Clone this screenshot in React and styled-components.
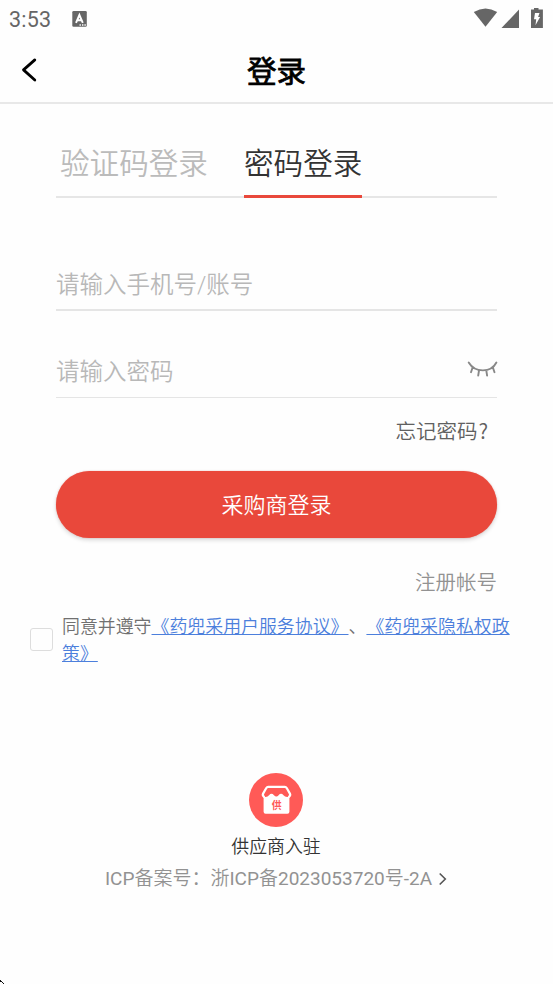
import React from "react";
import styled, { createGlobalStyle } from "styled-components";

const GlobalStyle = createGlobalStyle`
  * { box-sizing: border-box; }
  body {
    margin: 0;
    background: #fefefe;
    font-family: Roboto, "Noto Sans CJK SC", sans-serif;
    overflow: hidden;
    text-spacing-trim: space-all;
  }
`;

const Screen = styled.div`
  position: relative;
  width: 553px;
  height: 984px;
  display: flex;
  flex-direction: column;
  overflow: hidden;
`;

const StatusBar = styled.div`
  height: 40px;
  flex: none;
  display: flex;
  justify-content: space-between;
  padding: 0 9px;
  color: #666;
`;

const StatusGroup = styled.div`
  display: flex;
  height: 38px;
  align-items: center;
`;

const Clock = styled.span`
  font-size: 21.5px;
  line-height: 38px;
  letter-spacing: 0.2px;
  width: 63px;
  padding-top: 1px;
`;

const Header = styled.header`
  height: 64px;
  flex: none;
  display: grid;
  grid-template-columns: 60px 1fr 60px;
  align-items: center;
  border-bottom: 2px solid #e8e8e8;
`;

const BackButton = styled.button`
  border: 0;
  background: none;
  padding: 0 0 3px 20px;
  height: 62px;
  display: flex;
  align-items: center;
`;

const Title = styled.h1`
  margin: 0;
  padding-top: 2px;
  font-size: 29.5px;
  line-height: 60px;
  font-weight: 400;
  -webkit-text-stroke: 0.8px #000;
  text-align: center;
  color: #000;
`;

const Form = styled.main`
  flex: none;
  width: 441px;
  margin: 0 auto;
  display: flex;
  flex-direction: column;
`;

const Tabs = styled.nav`
  height: 94px;
  display: flex;
  align-items: flex-end;
  gap: 36px;
  padding-left: 4px;
  box-shadow: inset 0 -2px #e6e6e6;
`;

const Tab = styled.button`
  border: 0;
  border-bottom: 3px solid ${(p) => (p.$active ? "#e9483b" : "transparent")};
  background: none;
  padding: 0 0 9px;
  font-family: inherit;
  font-size: 29.6px;
  font-weight: 350;
  line-height: 44px;
  color: ${(p) => (p.$active ? "#333" : "#bbb")};
  white-space: nowrap;
`;

const Field = styled.label`
  height: ${(p) => p.$height}px;
  display: flex;
  align-items: flex-end;
  justify-content: space-between;
  border-bottom: ${(p) => p.$rule}px solid #e5e5e5;
`;

const Placeholder = styled.span`
  font-size: 23.5px;
  font-weight: 350;
  line-height: 34px;
  padding-bottom: ${(p) => p.$bottom}px;
  color: #b8b8b8;
`;

const EyeSlot = styled.span`
  display: flex;
  margin-right: -1px;
  padding-bottom: 19px;
`;

const TextLink = styled.a`
  align-self: flex-end;
  height: 30px;
  font-size: 20.5px;
  font-weight: 350;
  line-height: 30px;
  color: ${(p) => p.$color};
  margin: ${(p) => p.$margin};
`;

const QuestionMark = styled.span`
  font-family: "Noto Sans CJK SC", sans-serif;
  line-height: 1;
  margin-left: 1px;
`;

const LoginButton = styled.button`
  height: 67px;
  border: 0;
  border-radius: 34px;
  background: #e9483b;
  color: #fff;
  font-family: inherit;
  font-size: 22px;
  font-weight: 350;
  line-height: 67px;
  box-shadow: 0 0 1px rgba(233, 72, 59, 0.7), 0 2px 4px rgba(0, 0, 0, 0.16);
`;

const Agreement = styled.section`
  display: flex;
  align-items: flex-start;
  gap: 9px;
  margin: 15px 32px 0 30px;
`;

const Checkbox = styled.span`
  flex: none;
  width: 23px;
  height: 23px;
  margin-top: 15px;
  border: 1px solid #ddd;
  border-radius: 3px;
`;

const AgreementText = styled.p`
  margin: 0;
  font-size: 17.92px;
  font-weight: 350;
  line-height: 27px;
  color: #707070;
`;

const PolicyLink = styled.a`
  color: #4c7fdc;
  text-decoration: underline;
  text-decoration-thickness: 1px;
`;

const Footer = styled.footer`
  display: flex;
  flex-direction: column;
  align-items: center;
  margin-top: 106px;
  padding-right: 1px;
`;

const SupplierLabel = styled.span`
  font-size: 17.9px;
  font-weight: 350;
  line-height: 26px;
  margin-top: 7px;
  color: #333;
`;

const IcpLink = styled.a`
  display: flex;
  align-items: center;
  gap: 6px;
  height: 28px;
  font-size: 19px;
  font-weight: 350;
  line-height: 28px;
  margin-top: 5px;
  color: #929292;
`;

const Code = styled.span`
  font-weight: 400;
`;

const Chevron = styled.svg`
  margin-bottom: 1px;
`;

const Pointer = styled.svg`
  position: absolute;
  left: 0;
  bottom: 0;
`;

export default function App() {
  return (
    <Screen>
      <GlobalStyle />
      <StatusBar>
        <StatusGroup>
          <Clock>3:53</Clock>
          <svg width="16" height="17" viewBox="0 0 16 17">
            <rect x="0.3" y="0" width="14.5" height="15.7" rx="1.3" fill="#666" />
            <path d="M4 11.8 7.4 4 10.8 11.8M5.2 9.2h4.4" fill="none" stroke="#fff" strokeWidth="1.9" />
            <path d="M7.5 14h1.4M10 14h1.4M12.4 14h1.4" stroke="#fff" strokeWidth="1.3" />
          </svg>
        </StatusGroup>
        <StatusGroup>
          <svg width="71" height="22" viewBox="0 0 71 22">
            <path d="M0.8 4Q12.5-3 24.2 4L12.5 18.7Z" fill="#666" />
            <path d="M46 1.5V20H28.5Z" fill="#666" />
            <path d="M58 1.6h3V0h4.5v1.6H69.9V20H58Z" fill="#666" />
            <path d="M62 5h4.5l-1.4 4h2L62.5 17.3l.7-6H61Z" fill="#fff" />
          </svg>
        </StatusGroup>
      </StatusBar>

      <Header>
        <BackButton aria-label="返回">
          <svg width="18" height="26" viewBox="0 0 18 26" fill="none" stroke="#000" strokeWidth="2.8" strokeLinecap="round" strokeLinejoin="round">
            <path d="M14.8 2.9 3.5 12.9 14.8 23" />
          </svg>
        </BackButton>
        <Title>登录</Title>
      </Header>

      <Form>
        <Tabs>
          <Tab>验证码登录</Tab>
          <Tab $active>密码登录</Tab>
        </Tabs>
        <Field $height={113} $rule={2}>
          <Placeholder $bottom={7}>请输入手机号/账号</Placeholder>
        </Field>
        <Field $height={87} $rule={1}>
          <Placeholder $bottom={8}>请输入密码</Placeholder>
          <EyeSlot>
            <svg width="31" height="17" viewBox="0 0 31 17" fill="none" stroke="#888" strokeWidth="1.9" strokeLinecap="round">
              <path d="M1.7 1.5C8 12 24 12 29.4 1.5M5.7 6.2 4 11.2M12 9.5 11.2 14.6M19.3 9.5 20.1 14.6M25.8 6.2 27.5 11.2" />
            </svg>
          </EyeSlot>
        </Field>
        <TextLink $color="#606060" $margin="19px 9px 24px 0">忘记密码<QuestionMark>?</QuestionMark></TextLink>
        <LoginButton>采购商登录</LoginButton>
        <TextLink $color="#929292" $margin="30px 0 0">注册帐号</TextLink>
      </Form>

      <Agreement>
        <Checkbox />
        <AgreementText>
          同意并遵守<PolicyLink>《药兜采用户服务协议》</PolicyLink>、<PolicyLink>《药兜采隐私权政策》</PolicyLink>
        </AgreementText>
      </Agreement>

      <Footer>
        <svg width="54" height="54" viewBox="0 0 54 54">
          <circle cx="27" cy="27" r="27" fill="#ff5a57" />
          <path d="M15.6 24.2c-1.6-.9-2.2-2.2-1.5-3.6l3.2-5.6c.4-.7 1-1.1 1.9-1.1h16.6c.9 0 1.5.4 1.9 1.1l3.2 5.6c.7 1.4.1 2.7-1.5 3.6" fill="none" stroke="#fff" strokeWidth="2.2" />
          <path d="M14.6 23.6Q18.2 24.8 20 22.2Q22.5 19.4 25 22.2Q27.3 25 29.6 22.2Q32 19.4 34.5 22.2Q36.5 24.8 40.4 23.6V38.8q0 2-2 2H16.6q-2 0-2-2Z" fill="#fff" />
          <text x="27.6" y="35.7" textAnchor="middle" fontFamily="Noto Sans CJK SC, sans-serif" fontSize="9.8" fontWeight="700" fill="#ff5a57">供</text>
        </svg>
        <SupplierLabel>供应商入驻</SupplierLabel>
        <IcpLink>
          <span><Code>ICP</Code>备案号：浙<Code>ICP</Code>备<Code>2023053720</Code>号<Code>-2A</Code></span>
          <Chevron width="9" height="14" viewBox="0 0 9 14" fill="none" stroke="#555" strokeWidth="1.6">
            <path d="m1.7 1.5 5.6 5.5-5.6 5.5" />
          </Chevron>
        </IcpLink>
      </Footer>

      <Pointer width="4" height="4" viewBox="0 0 4 4">
        <path d="M0 0h1v1h1v1h1v1h1v1H3V3H2V2H0Z" fill="#111" />
      </Pointer>
    </Screen>
  );
}
